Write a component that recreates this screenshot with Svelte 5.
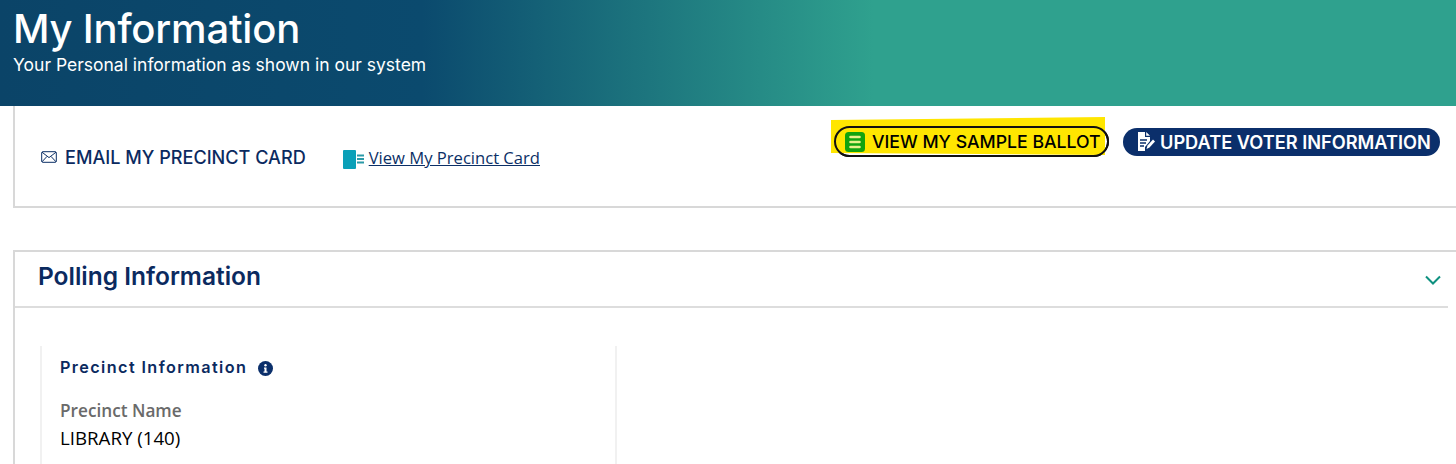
<script>
  let name = 'LIBRARY (140)';
</script>

<div class="page">
  <header class="banner">
    <h1>My Information</h1>
    <p>Your Personal information as shown in our system</p>
  </header>

  <section class="actions-card">
    <div class="card-links">
      <a class="email" href="#email">
        <svg width="16" height="12" viewBox="0 0 16 12" fill="none" stroke="#0b2f66" stroke-width="1">
          <rect x="0.7" y="0.7" width="14.6" height="10.6" rx="1.2" />
          <path d="M1 1.2l7 5.4 7-5.4M1 10.8l5-5.4M15 10.8l-5-5.4" />
        </svg>
        EMAIL MY PRECINCT CARD
      </a>
      <a class="view" href="#view">
        <svg width="21" height="19" viewBox="0 0 21 19">
          <rect width="13" height="19" rx="1" fill="#0aa0b8" />
          <path d="M14 5.500h7M14 9h7M14 12.500h7" stroke="#2a9aa8" stroke-width="1.8" />
        </svg>
        <span>View My Precinct Card</span>
      </a>
    </div>
    <div class="buttons">
      <button class="ballot">
        <span class="marker"></span>
        <svg width="20" height="20" viewBox="0 0 20 20">
          <rect width="20" height="20" rx="3.5" fill="#12a30e" />
          <path d="M5.500 5h9M5.500 10h9M5.500 15h9" stroke="#e9f08a" stroke-width="2.6" stroke-linecap="round" />
        </svg>
        <span class="label">VIEW MY SAMPLE BALLOT</span>
      </button>
      <button class="update">
        <svg width="18" height="19" viewBox="0 0 18 19">
          <path d="M1 0h7v5h5v4l-5 6v4H1z" fill="#fff" />
          <path d="M9.200 0l3.800 3.800h-3.800z" fill="#fff" />
          <path d="M3 8h7M3 11h6M3 14h4" stroke="#0b2f6b" stroke-width="1.3" />
          <path d="M9.500 17l1-3.500 5.500-6 2 2-5.500 6z" fill="#fff" />
        </svg>
        <span class="label">UPDATE VOTER INFORMATION</span>
      </button>
    </div>
  </section>

  <section class="polling">
    <div class="polling-head">
      <h2>Polling Information</h2>
      <svg width="16" height="10" viewBox="0 0 16 10" fill="none" stroke="#0e9180" stroke-width="2">
        <path d="M1 1.500l7 7 7-7" />
      </svg>
    </div>
    <div class="polling-body">
      <div class="precinct">
        <h3>
          Precinct Information
          <svg width="15" height="15" viewBox="0 0 15 15">
            <circle cx="7.500" cy="7.500" r="7.500" fill="#0b2f6b" />
            <circle cx="7.500" cy="4.200" r="1.200" fill="#fff" />
            <path d="M6 6.500h2.500v4h1v1.200h-4v-1.200h1v-2.800h-.5z" fill="#fff" />
          </svg>
        </h3>
        <div class="field-label">Precinct Name</div>
        <div class="field-value">{name}</div>
      </div>
    </div>
  </section>
</div>

<style>
  :global(body) {
    margin: 0;
    background: #fff;
    overflow: hidden;
  }

  .page {
    width: 1456px;
    height: 464px;
    overflow: hidden;
    font-family: 'Open Sans', 'Noto Sans', sans-serif;
  }

  .banner {
    height: 106px;
    box-sizing: border-box;
    padding: 8px 13px 0;
    color: #fff;
    background: linear-gradient(90deg, #0b4468 0%, #0b4a6e 29%, #2fa18e 60%, #2fa18e 100%);
    font-family: Inter, Lato, sans-serif;
  }

  .banner h1 {
    margin: 0;
    font-size: 40px;
    line-height: 42px;
    font-weight: 500;
    letter-spacing: -0.2px;
  }

  .banner p {
    margin: 4px 0 0;
    font-size: 17.500px;
    line-height: 22px;
    font-weight: 400;
  }

  .actions-card {
    margin-left: 13px;
    height: 102px;
    box-sizing: border-box;
    border-left: 2px solid #d8d8d8;
    border-bottom: 2px solid #d8d8d8;
    display: flex;
    justify-content: space-between;
    align-items: flex-start;
    padding: 20px 16px 0 26px;
  }

  .card-links {
    display: flex;
    align-items: center;
    gap: 37px;
    padding-top: 19px;
  }

  .email {
    display: flex;
    align-items: center;
    gap: 8px;
    color: #0b2a5f;
    font-family: Inter, Lato, sans-serif;
    font-size: 18.100px;
    font-weight: 500;
    text-decoration: none;
  }

  .view {
    display: flex;
    align-items: center;
    gap: 5px;
    color: #0b2f66;
    font-size: 16.600px;
  }

  .view svg {
    margin-top: 5px;
  }

  .buttons {
    display: flex;
    align-items: center;
    gap: 14px;
  }

  button {
    display: flex;
    align-items: center;
    border-radius: 16px;
    font-family: Inter, Lato, sans-serif;
    font-weight: 500;
    font-size: 18px;
    white-space: nowrap;
    padding: 0;
    box-sizing: border-box;
  }

  .ballot {
    position: relative;
    width: 275px;
    height: 31px;
    padding-left: 9px;
    gap: 7px;
    border: 2px solid #111;
    background: #fff;
    color: #000;
    font-size: 17.700px;
  }

  /* yellow highlighter stroke over the button */
  .marker {
    position: absolute;
    left: -5px;
    top: -11px;
    width: 274px;
    height: 38px;
    background: #ffe600;
    clip-path: polygon(0 3px, 100% 0, 100% 100%, 0 36px);
  }

  .ballot::before {
    content: '';
    position: absolute;
    inset: -2px;
    border: 2px solid #111;
    border-radius: 16px;
    z-index: 1;
  }

  .ballot svg,
  .ballot .label {
    position: relative;
    z-index: 2;
  }

  .update {
    width: 317px;
    height: 28px;
    padding-left: 14px;
    gap: 5px;
    border: none;
    background: #0b2f6b;
    color: #fff;
    font-weight: 600;
    font-size: 18.200px;
  }

  .polling {
    margin: 42px 0 0 13px;
    border-left: 2px solid #d8d8d8;
    border-top: 2px solid #d8d8d8;
    height: 300px;
  }

  .polling-head {
    height: 56px;
    width: 1433px;
    border-bottom: 2px solid #ddd;
    display: flex;
    align-items: center;
    justify-content: space-between;
    padding: 0 7px 0 23px;
    box-sizing: border-box;
    color: #0b2a5f;
  }

  .polling-head h2 {
    margin: 0;
    font-family: Inter, Lato, sans-serif;
    font-size: 24.500px;
    font-weight: 600;
    padding-bottom: 6px;
  }

  .polling-head svg {
    margin-top: 1px;
  }

  .polling-body {
    padding: 38px 0 0 25px;
  }

  .precinct {
    width: 577px;
    height: 120px;
    box-sizing: border-box;
    padding: 11px 18px;
    border-left: 2px solid #f1f1f1;
    border-right: 2px solid #f1f1f1;
  }

  .precinct h3 {
    margin: 0;
    display: flex;
    align-items: center;
    gap: 11px;
    color: #0b2a5f;
    font-family: Inter, Lato, sans-serif;
    font-size: 16.200px;
    font-weight: 600;
    letter-spacing: 1.4px;
  }

  .precinct h3 svg {
    margin-top: 3px;
  }

  .field-label {
    margin-top: 23px;
    color: #6a6a6a;
    font-size: 17.200px;
    line-height: 22px;
    font-weight: 600;
  }

  .field-value {
    margin-top: 4px;
    color: #000;
    font-size: 18.700px;
    line-height: 23px;
  }
</style>
